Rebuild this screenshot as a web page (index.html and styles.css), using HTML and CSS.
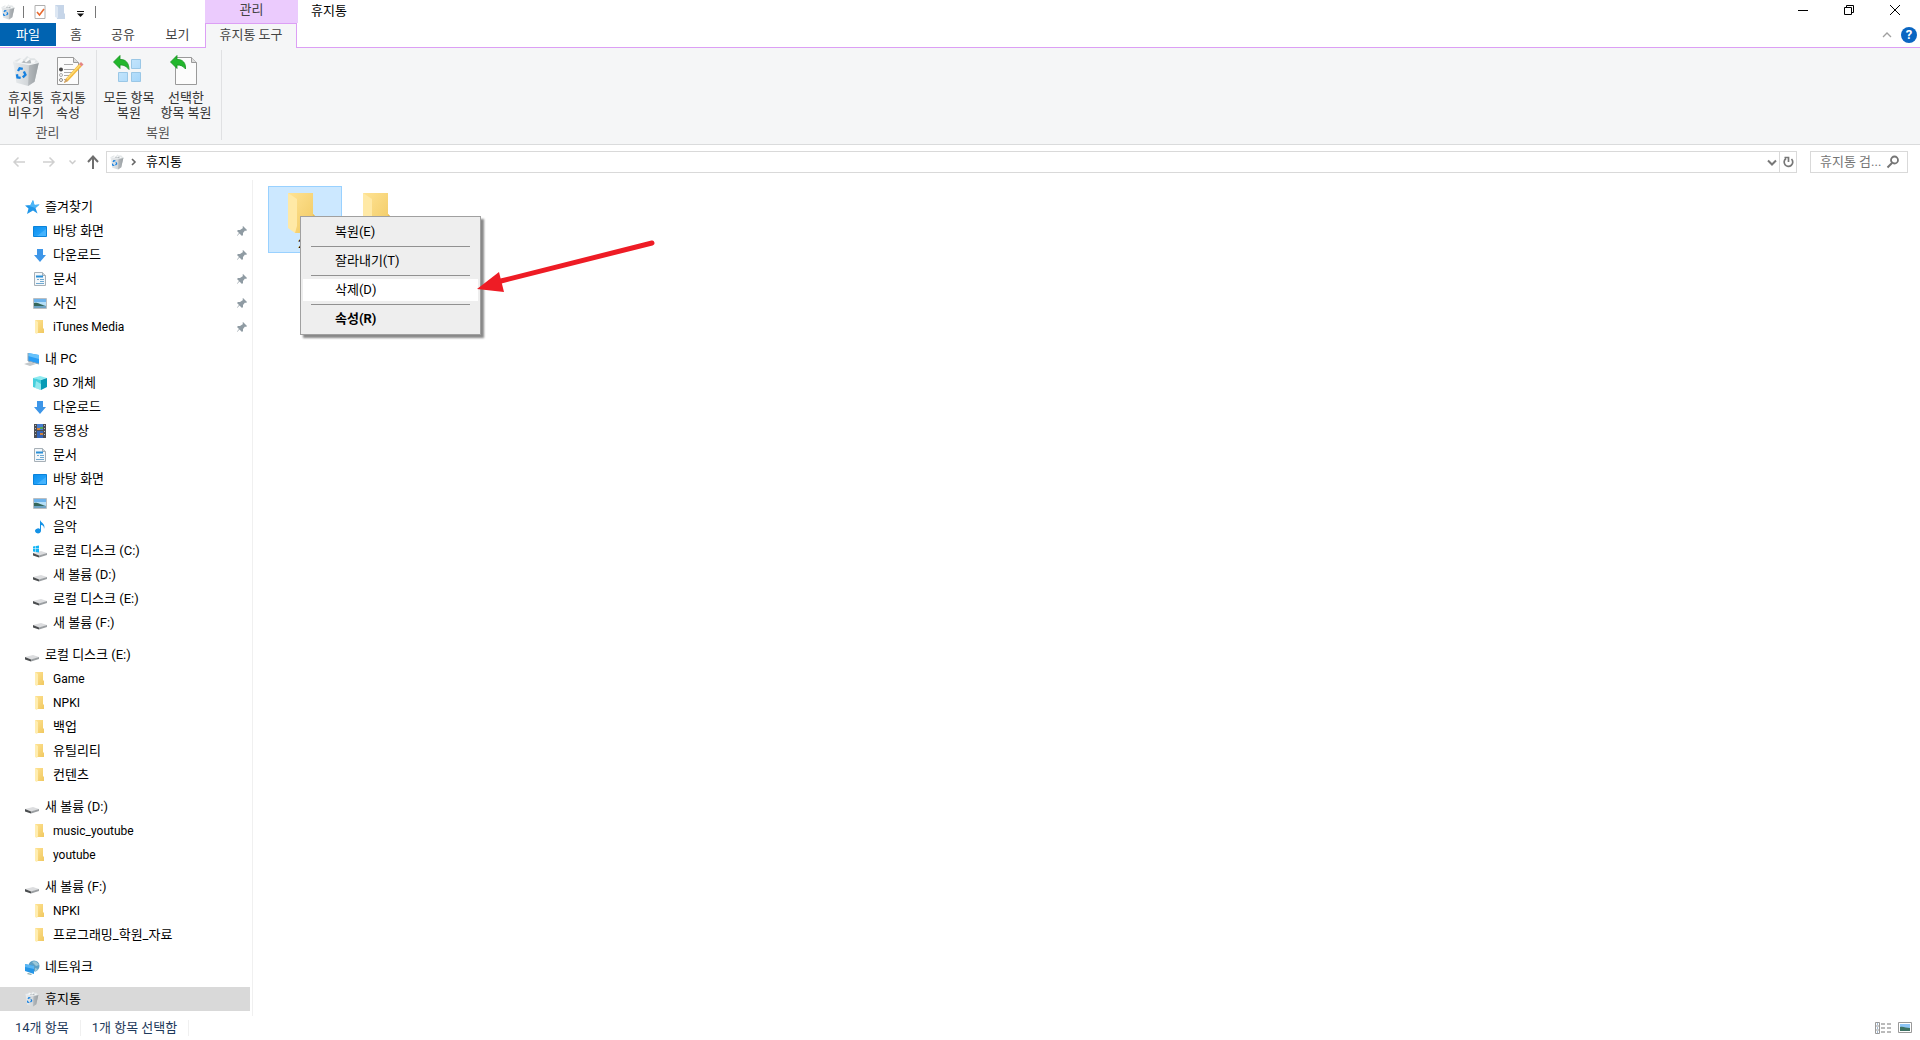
FILE: index.html
```html
<!DOCTYPE html>
<html lang="ko">
<head>
<meta charset="utf-8">
<title>휴지통</title>
<link rel="stylesheet" href="styles.css">
</head>
<body>
<svg class="defs" aria-hidden="true">
  <defs>
    <linearGradient id="gBin" x1="0" y1="0" x2="1" y2="0"><stop offset="0" stop-color="#e9ecee"/><stop offset=".55" stop-color="#d3d7da"/><stop offset="1" stop-color="#8f9599"/></linearGradient>
    <linearGradient id="gFold" x1="0" y1="0" x2="1" y2="1"><stop offset="0" stop-color="#ffe394"/><stop offset="1" stop-color="#f0c860"/></linearGradient>
    <linearGradient id="gBlue" x1="0" y1="0" x2="1" y2="1"><stop offset="0" stop-color="#0a8fee"/><stop offset="1" stop-color="#33adff"/></linearGradient>
    <linearGradient id="gTile" x1="0" y1="0" x2="1" y2="1"><stop offset="0" stop-color="#cfeafc"/><stop offset="1" stop-color="#a5d6fa"/></linearGradient>
    <symbol id="bin" viewBox="0 0 26 30">
      <path d="M1 6 7 3l4 1 3-3 3 2 4 0 4 4-1 4H2z" fill="#dfe3e5"/>
      <path d="m5 6 4-3 3 3 3-4 3 3 4 0-2 4H4z" fill="#f7f8f8"/>
      <path d="m8 8 3-3 2 2 4-3 1 4z" fill="#b4babe"/>
      <path d="M1 6l15 3 9-2-4 18-6 4-11-3z" fill="url(#gBin)"/>
      <path d="M16 9 25 7l-4 18-6 4z" fill="#a0a6aa" opacity=".55"/>
      <path d="M1 6l15 3 9-2" fill="none" stroke="#f2f4f5"/>
      <g fill="none" stroke="#1681e0" stroke-width="2.2"><path d="m5.500 15 1.500-2.500 3 .5M11 15.500l1.500 3-2.500 2.500M8 21.500l-3-.5-.5-3"/></g>
    </symbol>
    <symbol id="folder" viewBox="0 0 16 16"><path d="M3 1h8v8l1 1v4H5z" fill="url(#gFold)"/><path d="m3 1 3 2v10l-1 2-2-1z" fill="#ffedb0"/></symbol>
    <symbol id="desktop" viewBox="0 0 16 16"><path d="M1.500 3.500h13v10h-13z" fill="url(#gBlue)" stroke="#0b83da"/><path d="M5 13 14 6v7z" fill="#58bcff" opacity=".6"/></symbol>
    <symbol id="down" viewBox="0 0 16 16"><path d="M5 2h6v6h3l-6 7-6-7h3z" fill="#3d96e8"/></symbol>
    <symbol id="doc" viewBox="0 0 16 16"><path d="M2.500 1.500h8l3 3v10h-11z" fill="#f3f7fa" stroke="#a7b0b7"/><path d="M10.500 1.500v3h3" fill="#ccd5db" stroke="#a7b0b7"/><path d="M4 5.500h7" stroke="#2b8fd6" stroke-width="2"/><path d="M8 8.500h4M5 8.500h2M8 10.500h4M4 12.500h8" stroke="#70a9d1"/></symbol>
    <symbol id="pic" viewBox="0 0 16 16"><path d="M1.500 3.500h13v10h-13z" fill="#b5def7" stroke="#b9bec2"/><path d="M2 4h12v3H2z" fill="#6db3ec"/><path d="M2 8c3-1 5 1 12 3v1H2z" fill="#35675b"/><path d="M2 11h12v2H2z" fill="#6ea3c4"/></symbol>
    <symbol id="star" viewBox="0 0 16 16"><path d="m9 1 1.500 5 5-.5-4 3.500 2 5.500L9 11.500 3 15l1.500-5.500L1 6.500l5.500-.5z" fill="#2196e8"/><path d="m9 1 1.500 5 5-.5-4 3.500-8-2.500 3-.5z" fill="#4cb5f7"/></symbol>
    <symbol id="pc" viewBox="0 0 16 16"><path d="m4 2 11 2v9L4 10z" fill="#2a9df4"/><path d="m4 2 11 2v4L4 5z" fill="#67c2fb"/><path d="M4 2v8l11 3" fill="none" stroke="#8fa5b5"/><path d="m0 13 6-2 6 2-6 2z" fill="#c3c8cb"/></symbol>
    <symbol id="cube" viewBox="0 0 16 16"><path d="m1 3 7-2 7 2-7 2z" fill="#8eeaf0"/><path d="M1 3l8 2v10l-8-3z" fill="#45cfdc"/><path d="M9 5l6-2v9l-6 3z" fill="#079bb5"/><path d="m4 6 5 3v6l-6-2z" fill="#b2f2f5" opacity=".7"/></symbol>
    <symbol id="film" viewBox="0 0 16 16"><path d="M2 1h12v14H2z" fill="#4b4e54"/><path d="M5 1h6v6H5z" fill="#477dd0"/><path d="M5 8h6v7H5z" fill="#3565b8"/><path d="M5 5h3v2H5zM8 10h3v2H8z" fill="#d0813a"/><path d="M8 4h3v2H8z" fill="#51a458"/><path d="M3.500 2v12M12.500 2v12" stroke="#bcc0c6" stroke-dasharray="1 2"/></symbol>
    <symbol id="note" viewBox="0 0 16 16"><path d="M8 1c1 3 6 4 4 9 0-3-1-4-3-4v6a3 2.500 0 1 1-1-2z" fill="#1492e6"/></symbol>
    <symbol id="drive" viewBox="0 0 16 16"><path d="m1 10 8-2 6 2-8 3z" fill="#dcdddf"/><path d="m1 10 6 2.500v2L1 12.500z" fill="#4b4e50"/><path d="m7 12.500 8-2.500v2l-8 2.500z" fill="#9a9ea1"/></symbol>
    <symbol id="cdrive" viewBox="0 0 16 16"><use href="#drive"/><path d="M1 3.500 3.500 3v2.500H1zM4 3l3-.5v3H4zM1 6h2.500v3L1 8.500zM4 6h3v3.500L4 9z" fill="#13b5f5"/></symbol>
    <symbol id="net" viewBox="0 0 16 16"><circle cx="10" cy="7" r="5.500" fill="#5c9fc4"/><path d="M8 3c3-2 6 1 7 3l-3 1zM11 9l3 1-3 3z" fill="#9cc8d8"/><path d="m1 5 9 2v8L1 12z" fill="#2595e6"/><path d="m1 5 9 2v3L1 8z" fill="#59b5f3"/><path d="m4 14 4 1-1 1-4-1z" fill="#8aa"/></symbol>
    <symbol id="pin" viewBox="0 0 12 12"><path d="M7 1 11 5 10 6 9 5.500 7 8v2L6 11 3.500 8.500 1 11 1 10.500 3 8 1 6l1-1h2l3-2-.500-1z" fill="#8f9ba3"/></symbol>
    <symbol id="bigfolder" viewBox="0 0 32 44"><path d="M1 1h25v21l2 2v17H8z" fill="url(#gFold)"/><path d="m1 1 9 6v27l-2 7-7-5z" fill="#ffe9a6"/><path d="M26 22l2 2v17l-4-1z" fill="#e8bd57"/></symbol>
  </defs>
</svg>

<header class="top">
  <div class="quick">
    <svg class="i16"><use href="#bin"/></svg><span class="bar"></span>
    <button class="plain" aria-label="속성"><svg class="i16" viewBox="0 0 16 16"><path d="M3 1.500h10v13H3z" fill="#fff" stroke="#b0b0b0"/><path d="m5 8 2.500 3L12 5" fill="none" stroke="#e8692f" stroke-width="1.600"/></svg></button>
    <button class="plain" aria-label="새 폴더"><svg class="i16" viewBox="0 0 16 16"><path d="M3 1h9v8l1 1v5H5z" fill="#c6d5e8"/><path d="m3 1 3 2v11l-3-1z" fill="#dde7f3"/></svg></button>
    <button class="plain" aria-label="사용자 지정"><svg class="i16" viewBox="0 0 16 16"><path d="M5 7.500h7" stroke="#111"/><path d="M5 9.500h7L8.500 13z" fill="#111"/></svg></button>
    <span class="bar"></span>
  </div>
  <div class="context">관리</div>
  <h1>휴지통</h1>
  <div class="window">
    <button class="plain" aria-label="최소화"><svg viewBox="0 0 12 12"><path d="M1 6.500h10" stroke="#000"/></svg></button>
    <button class="plain" aria-label="이전 크기로"><svg viewBox="0 0 12 12"><path d="M1.500 3.500h7v7h-7zM3.500 3.500v-2h7v7h-2" fill="none" stroke="#000"/></svg></button>
    <button class="plain" aria-label="닫기"><svg viewBox="0 0 12 12"><path d="m1 1 10 10M11 1 1 11" stroke="#000"/></svg></button>
  </div>
</header>
<nav class="tabs">
  <button class="file">파일</button><button class="t1">홈</button><button class="t2">공유</button><button class="t3">보기</button><button class="active">휴지통 도구</button>
  <div class="help">
    <button class="plain" aria-label="리본 최소화"><svg class="i16" viewBox="0 0 16 16"><path d="m4 10 4-4 4 4" fill="none" stroke="#a0a0a0" stroke-width="1.300"/></svg></button>
    <button class="round" aria-label="도움말">?</button>
  </div>
</nav>
<section class="ribbon">
  <div class="group manage">
    <div class="cmds">
      <button><svg class="i32"><use href="#bin"/></svg><span>휴지통<br>비우기</span></button>
      <button><svg class="i32" viewBox="0 0 32 32"><path d="M5.500 2.500h16l5 5v22h-21z" fill="#fcfcfc" stroke="#9a9a9a"/><path d="M21.500 2.500v5h5" fill="#ddd" stroke="#9a9a9a"/><path d="M12 9.500h9M12 14.500h11M12 17.500h9M12 20.500h9M12 24.500h5" stroke="#aaa"/><circle cx="9" cy="14.500" r="2" fill="#444"/><circle cx="9" cy="20" r="1.500" fill="none" stroke="#aaa"/><circle cx="9" cy="25" r="1.500" fill="none" stroke="#888"/><path d="M12 28l1.500-4L27 9l2.500 2.500L16 26z" fill="#f5b93b"/><path d="M15 24 28 10" stroke="#fcdc77" stroke-width="1.200"/><path d="m27 9 2-2 2.500 2.500-2 2z" fill="#e48684"/><path d="m12 28 1.500-4 2.500 2z" fill="#c9a171"/></svg><span>휴지통<br>속성</span></button>
    </div>
    <div class="label">관리</div>
  </div>
  <div class="group restore">
    <div class="cmds">
      <button><svg class="i32" viewBox="0 0 32 32"><g fill="url(#gTile)" stroke="#9ac7e6"><path d="M18.500 4.500h9v9h-9zM5.500 17.500h9v9h-9zM18.500 17.500h9v9h-9z"/></g><path d="M.5 7 7 .500V4.500c6-.500 9 4 9 10C13 11 11 10 7 10v3.500z" fill="#22b72c" stroke="#159321" stroke-width=".8"/></svg><span>모든 항목<br>복원</span></button>
      <button><svg class="i32" viewBox="0 0 32 32"><path d="M5.500 2.500h16l5 5v22h-21z" fill="#fcfcfc" stroke="#9a9a9a"/><path d="M21.500 2.500v5h5" fill="#ddd" stroke="#9a9a9a"/><path d="M.5 7 7 .500V4.500c6-.500 9 4 8.500 9.500C13 11 11 10 7 10v3.500z" fill="#22b72c" stroke="#159321" stroke-width=".8"/></svg><span>선택한<br>항목 복원</span></button>
    </div>
    <div class="label">복원</div>
  </div>
</section>
<div class="location">
  <button class="plain arrow" aria-label="뒤로"><svg viewBox="0 0 16 16"><path d="M14 8H3m4.500-4.500L3 8l4.500 4.500" fill="none" stroke="#d0d0d0" stroke-width="1.500"/></svg></button>
  <button class="plain arrow" aria-label="앞으로"><svg viewBox="0 0 16 16"><path d="M2 8h11M8.500 3.500 13 8l-4.500 4.500" fill="none" stroke="#d0d0d0" stroke-width="1.500"/></svg></button>
  <button class="plain small" aria-label="최근 위치"><svg viewBox="0 0 16 16"><path d="m5.500 6.500 3 3 3-3" fill="none" stroke="#ccc" stroke-width="1.500"/></svg></button>
  <button class="plain up" aria-label="위로"><svg viewBox="0 0 16 16"><path d="M8 15V3M3 8l5-5.500L13 8" fill="none" stroke="#6e6e6e" stroke-width="2"/></svg></button>
  <div class="address">
    <svg class="i16"><use href="#bin"/></svg>
    <svg class="i16" viewBox="0 0 16 16"><path d="m7 5 3 3-3 3" fill="none" stroke="#666" stroke-width="1.600"/></svg>
    <span class="crumb">휴지통</span>
    <button class="plain" aria-label="이전 위치"><svg class="i16" viewBox="0 0 16 16"><path d="m5 6.500 4 4 4-4" fill="none" stroke="#777" stroke-width="2"/></svg></button>
    <button class="plain refresh" aria-label="새로 고침"><svg class="i16" viewBox="0 0 16 16"><path d="M6 4.500a4.300 4.300 0 1 0 5.500.5M4.500 3.500h4V8" fill="none" stroke="#777" stroke-width="1.700"/></svg></button>
  </div>
  <div class="search">
    <input type="text" aria-label="휴지통 검색" placeholder="휴지통 검...">
    <svg class="i16" viewBox="0 0 16 16"><circle cx="9.500" cy="6" r="3.500" fill="none" stroke="#757575" stroke-width="1.800"/><path d="M7 9 2.500 13.500" stroke="#757575" stroke-width="2"/></svg>
  </div>
</div>
<main class="body">
  <nav class="tree">
    <ul>
      <li class="head"><a href="#"><svg class="i16"><use href="#star"/></svg>즐겨찾기</a></li>
      <li><a href="#"><svg class="i16"><use href="#desktop"/></svg>바탕 화면<svg class="pin"><use href="#pin"/></svg></a></li>
      <li><a href="#"><svg class="i16"><use href="#down"/></svg>다운로드<svg class="pin"><use href="#pin"/></svg></a></li>
      <li><a href="#"><svg class="i16"><use href="#doc"/></svg>문서<svg class="pin"><use href="#pin"/></svg></a></li>
      <li><a href="#"><svg class="i16"><use href="#pic"/></svg>사진<svg class="pin"><use href="#pin"/></svg></a></li>
      <li class="latin"><a href="#"><svg class="i16"><use href="#folder"/></svg>iTunes Media<svg class="pin"><use href="#pin"/></svg></a></li>
    </ul>
    <ul>
      <li class="head"><a href="#"><svg class="i16"><use href="#pc"/></svg>내 PC</a></li>
      <li><a href="#"><svg class="i16"><use href="#cube"/></svg>3D 개체</a></li>
      <li><a href="#"><svg class="i16"><use href="#down"/></svg>다운로드</a></li>
      <li><a href="#"><svg class="i16"><use href="#film"/></svg>동영상</a></li>
      <li><a href="#"><svg class="i16"><use href="#doc"/></svg>문서</a></li>
      <li><a href="#"><svg class="i16"><use href="#desktop"/></svg>바탕 화면</a></li>
      <li><a href="#"><svg class="i16"><use href="#pic"/></svg>사진</a></li>
      <li><a href="#"><svg class="i16"><use href="#note"/></svg>음악</a></li>
      <li><a href="#"><svg class="i16"><use href="#cdrive"/></svg>로컬 디스크 (C:)</a></li>
      <li><a href="#"><svg class="i16"><use href="#drive"/></svg>새 볼륨 (D:)</a></li>
      <li><a href="#"><svg class="i16"><use href="#drive"/></svg>로컬 디스크 (E:)</a></li>
      <li><a href="#"><svg class="i16"><use href="#drive"/></svg>새 볼륨 (F:)</a></li>
    </ul>
    <ul>
      <li class="head"><a href="#"><svg class="i16"><use href="#drive"/></svg>로컬 디스크 (E:)</a></li>
      <li class="latin"><a href="#"><svg class="i16"><use href="#folder"/></svg>Game</a></li>
      <li class="latin"><a href="#"><svg class="i16"><use href="#folder"/></svg>NPKI</a></li>
      <li><a href="#"><svg class="i16"><use href="#folder"/></svg>백업</a></li>
      <li><a href="#"><svg class="i16"><use href="#folder"/></svg>유틸리티</a></li>
      <li><a href="#"><svg class="i16"><use href="#folder"/></svg>컨텐츠</a></li>
    </ul>
    <ul>
      <li class="head"><a href="#"><svg class="i16"><use href="#drive"/></svg>새 볼륨 (D:)</a></li>
      <li class="latin"><a href="#"><svg class="i16"><use href="#folder"/></svg>music_youtube</a></li>
      <li class="latin"><a href="#"><svg class="i16"><use href="#folder"/></svg>youtube</a></li>
    </ul>
    <ul>
      <li class="head"><a href="#"><svg class="i16"><use href="#drive"/></svg>새 볼륨 (F:)</a></li>
      <li class="latin"><a href="#"><svg class="i16"><use href="#folder"/></svg>NPKI</a></li>
      <li><a href="#"><svg class="i16"><use href="#folder"/></svg>프로그래밍_학원_자료</a></li>
    </ul>
    <ul>
      <li class="head"><a href="#"><svg class="i16"><use href="#net"/></svg>네트워크</a></li>
    </ul>
    <ul>
      <li class="head current"><a href="#"><svg class="i16"><use href="#bin"/></svg>휴지통</a></li>
    </ul>
  </nav>
  <section class="files">
    <div class="tile selected"><svg class="big"><use href="#bigfolder"/></svg><span>2</span></div>
    <div class="tile"><svg class="big"><use href="#bigfolder"/></svg></div>
    <div class="menu" role="menu">
      <button role="menuitem">복원(E)</button><hr>
      <button role="menuitem">잘라내기(T)</button><hr>
      <button role="menuitem" class="hover">삭제(D)</button><hr>
      <button role="menuitem" class="strong">속성(R)</button>
    </div>
    <svg class="pointer" viewBox="0 0 184 60"><path d="M175 12 24 50" stroke="#ee1c25" stroke-width="5" stroke-linecap="round"/><path d="m0 58 22-17 5 20z" fill="#ee1c25"/></svg>
  </section>
</main>
<footer class="status">
  <span>14개 항목</span><span>1개 항목 선택함</span>
  <div class="views">
    <button class="plain" aria-label="자세히"><svg viewBox="0 0 18 14"><path d="M1.500 1.500h4v11h-4zM1.500 5h4M1.500 9h4" fill="none" stroke="#999"/><path d="M3 3h1M3 7h1M3 11h1" stroke="#47a"/><path d="M7 3h4M13 3h4M7 7h4M13 7h4M7 11h4M13 11h4" stroke="#777"/></svg></button>
    <button class="plain" aria-label="큰 아이콘"><svg viewBox="0 0 14 12"><path d="M.500.500h13v10H.500z" fill="#fff" stroke="#999"/><path d="M2 2h10v7H2z" fill="#8ec5f5"/><path d="M2 5c3-1 6 1 10 1v3H2z" fill="#3d7263"/></svg></button>
  </div>
</footer>
</body>
</html>
```
FILE: styles.css
```css
* { box-sizing: border-box; }
body {
  margin: 0;
  min-height: 100vh;
  display: flex;
  flex-direction: column;
  background: #fff;
  color: #000;
  font: 13px/16px Roboto, "Noto Sans CJK KR", sans-serif;
}
button, input { font: inherit; color: inherit; border: 0; padding: 0; background: none; }
svg { display: block; flex: none; }
.defs { position: absolute; width: 0; height: 0; }
.i16 { width: 16px; height: 16px; }
.i32 { width: 32px; height: 32px; }

/* title bar */
.top { display: flex; height: 23px; align-items: stretch; }
.quick { width: 205px; display: flex; align-items: center; gap: 4px; }
.quick .bar { width: 1px; height: 12px; margin: 0 4px 0 3px; background: #777; }
.context { width: 93px; background: #ebcbfd; color: #444; text-align: center; line-height: 19px; }
h1 { margin: 0 0 0 13px; font-size: 13px; font-weight: 400; line-height: 22px; }
.window { margin-left: auto; display: flex; align-items: center; gap: 34px; padding: 0 19px 3px 0; }
.window svg { width: 12px; height: 12px; }

/* ribbon tabs */
.tabs { display: flex; height: 25px; border-bottom: 1px solid #dc9ff5; color: #444; }
.tabs > button { height: 23px; line-height: 23px; }
.tabs > .file { width: 56px; background: #0063b1; color: #fff; }
.t1 { width: 40px; }
.t2 { width: 54px; }
.t3 { width: 55px; }
.tabs > .active { width: 92px; height: 25px; padding-bottom: 3px; background: #f5f6f7; border: 1px solid #dc9ff5; border-bottom: 0; line-height: 21px; }
.help { margin-left: auto; display: flex; align-items: center; gap: 6px; padding-right: 3px; }
.round { width: 16px; height: 16px; border-radius: 50%; background: #0a66c2; color: #fff; font-weight: 700; line-height: 16px; }

/* ribbon */
.ribbon { display: flex; height: 97px; padding: 2px 0 4px; background: #f5f6f7; border-bottom: 1px solid #dadbdc; color: #333; }
.group { display: flex; flex-direction: column; border-right: 1px solid #e0e1e3; }
.manage { width: 97px; padding: 0 6px 0 5px; }
.restore { width: 125px; padding: 0 6px 0 4px; }
.cmds { display: flex; height: 76px; }
.cmds button { display: flex; flex-direction: column; align-items: center; gap: 3px; padding-top: 5px; line-height: 15px; }
.manage button { width: 42px; }
.restore button:first-child { width: 56px; }
.restore button:last-child { width: 58px; }
.label { text-align: center; color: #555; line-height: 15px; }

/* address row */
.location { display: flex; height: 35px; padding: 6px 12px 7px 0; align-items: stretch; }
.location svg { width: 16px; height: 16px; }
.arrow { width: 30px; padding-left: 11px; }
.small { width: 22px; padding-left: 4px; }
.up { width: 24px; padding-left: 3px; }
.address { flex: 1; display: flex; align-items: center; border: 1px solid #d9d9d9; padding-left: 2px; }
.crumb { margin-left: 5px; flex: 1; }
.address .refresh { height: 20px; border-left: 1px solid #d9d9d9; }
.search { width: 98px; margin-left: 13px; display: flex; align-items: center; border: 1px solid #d9d9d9; padding: 0 6px 0 9px; }
.search input { flex: 1; min-width: 0; outline: 0; }
.search input::placeholder { color: #757575; opacity: 1; }

/* folder tree */
.body { flex: 1; display: flex; }
.tree { width: 252px; padding: 15px 2px 4px 0; }
.tree ul { list-style: none; margin: 0 0 8px; padding: 0; }
.tree ul:last-child { margin: 0; }
.tree a { display: flex; align-items: center; gap: 5px; height: 24px; padding: 0 2px 0 32px; color: #000; text-decoration: none; }
.tree .head a { padding-left: 24px; }
.latin { font-size: 12px; }
.current { background: #d9d9d9; }
.pin { width: 12px; height: 12px; margin-left: auto; }

/* file area */
.files { position: relative; flex: 1; display: flex; gap: 1px; align-items: flex-start; border-left: 1px solid #f0f0f0; padding: 6px 0 0 15px; }
.tile { width: 74px; height: 67px; border: 1px solid transparent; padding: 5px 4px 0 0; display: flex; flex-direction: column; align-items: center; }
.tile span { width: 10px; }
.selected { background: #cce8ff; border-color: #99d1ff; }
.big { width: 32px; height: 44px; }
.menu { position: absolute; left: 47px; top: 36px; width: 181px; padding: 4px 2px; background: #eee; border: 1px solid #a0a0a0; box-shadow: 3px 3px 2px #888; }
.menu button { display: block; width: 100%; height: 22px; padding-left: 32px; text-align: left; }
.menu hr { margin: 3px 8px; border: 0; height: 1px; background: #919191; }
.menu .hover { background: #fff; }
.menu .strong { font-weight: 700; }
.pointer { position: absolute; left: 224px; top: 51px; width: 184px; height: 60px; overflow: visible; }

/* status bar */
.status { display: flex; align-items: center; height: 24px; padding: 0 8px 0 15px; gap: 11px; color: #1e395b; }
.status span { padding-right: 11px; border-right: 1px solid #f0f0f0; }
.views { margin-left: auto; display: flex; align-items: center; gap: 6px; }
.views button:first-child svg { width: 18px; height: 14px; }
.views button:last-child svg { width: 14px; height: 12px; }
```
